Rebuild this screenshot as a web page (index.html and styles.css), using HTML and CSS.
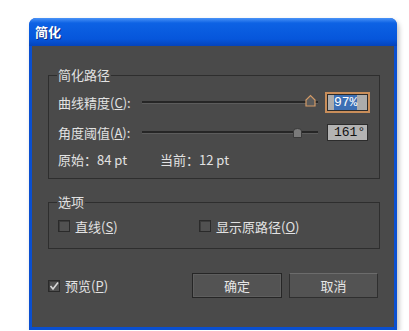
FILE: index.html
```html
<!DOCTYPE html>
<html lang="zh-CN">
<head>
    <meta charset="UTF-8">
    <title>简化</title>
    <link rel="stylesheet" href="styles.css">
</head>
<body>
    <div class="window">
        <div class="titlebar">简化</div>
        <div class="dialog">
            <fieldset class="group group-path">
                <legend>简化路径</legend>
                <div class="row">
                    <span class="label">曲线精度(<u>C</u>):</span>
                    <div class="slider">
                        <div class="track"></div>
                        <svg class="thumb thumb-active" style="left: 92.5%" width="11" height="13" viewBox="0 0 11 13">
                            <path d="M1 12 V6 L5.5 1.5 L10 6 V12 Z" fill="#5b5b5b" stroke="#d39a66" stroke-width="1.2"/>
                        </svg>
                    </div>
                    <span class="field field-focus"><span class="sel">97%</span></span>
                </div>
                <div class="row">
                    <span class="label">角度阈值(<u>A</u>):</span>
                    <div class="slider">
                        <div class="track"></div>
                        <svg class="thumb" style="left: 86%" width="9" height="10" viewBox="0 0 9 10">
                            <path d="M0.5 9.5 V3 Q0.5 0.5 4.5 0.5 Q8.5 0.5 8.5 3 V9.5 Z" fill="#7a7a7a" stroke="#3a3a3a"/>
                        </svg>
                    </div>
                    <span class="field">161°</span>
                </div>
                <div class="row row-info">
                    <span class="info">原始：84 pt</span>
                    <span>当前：12 pt</span>
                </div>
            </fieldset>

            <fieldset class="group group-options">
                <legend>选项</legend>
                <div class="row">
                    <label class="check check-first"><span class="box"></span>直线(<u>S</u>)</label>
                    <label class="check"><span class="box"></span>显示原路径(<u>O</u>)</label>
                </div>
            </fieldset>

            <div class="actions">
                <label class="check preview">
                    <span class="box">
                        <svg width="10" height="10" viewBox="0 0 10 10"><path d="M1.5 5 L4 8 L9 1.5" fill="none" stroke="#d8d8d8" stroke-width="1.6"/></svg>
                    </span>预览(<u>P</u>)
                </label>
                <button class="btn btn-default">确定</button>
                <button class="btn">取消</button>
            </div>
        </div>
    </div>
</body>
</html>
```

FILE: styles.css
```css
* {
    margin: 0;
    padding: 0;
    box-sizing: border-box;
}

body {
    background-color: #fff;
    font-family: "Noto Sans CJK SC", sans-serif;
    font-size: 13px;
    color: #e2e2e2;
}

.window {
    margin: 18px 0 0 29px;
    width: 368px;
    padding: 0 3px 3px;
    background-color: #0a4fd0;
    border-radius: 7px 7px 0 0;
    box-shadow: 2px 3px 5px rgba(0, 0, 0, 0.25);
}

.titlebar {
    height: 28px;
    margin: 0 -3px;
    padding: 0 6px;
    line-height: 28px;
    font-weight: bold;
    color: #fff;
    text-shadow: 1px 1px 0 #0b2d86;
    background: linear-gradient(#4a93f7, #0d62e4 18%, #0656db 75%, #0544bc);
    border-radius: 7px 7px 0 0;
}

.dialog {
    background-color: #4a4a4a;
    padding: 21px 14px 29px 16px;
}

.group {
    border: 1px solid #2e2e2e;
    padding: 9px 11px 9px 9px;
}

.group legend {
    padding: 0 1px;
    margin-left: -1px;
    line-height: 16px;
}

.group-options {
    margin-top: 15px;
    padding-top: 6px;
    padding-bottom: 12px;
}

.row {
    display: flex;
    align-items: center;
    height: 20px;
}

.row + .row {
    margin-top: 10px;
}

.row + .row-info {
    margin-top: 7px;
}

.label {
    width: 84px;
    white-space: nowrap;
}

.slider {
    flex: 1;
    position: relative;
    height: 20px;
    display: flex;
    align-items: center;
}

.track {
    width: 100%;
    height: 3px;
    background-color: #262626;
    border-bottom: 1px solid #5c5c5c;
}

.thumb {
    position: absolute;
    top: 3px;
}

.thumb-active {
    top: 2px;
}

.slider .thumb:not(.thumb-active) {
    top: 6px;
}

.field {
    margin-left: 9px;
    width: 41px;
    height: 17px;
    padding-left: 6px;
    line-height: 15px;
    font-family: "Liberation Mono", monospace;
    font-size: 13px;
    color: #111;
    background-color: #b3b3b3;
    border: 1px solid #2c2c2c;
}

.field-focus {
    outline: 2px solid #c98e5a;
    background-color: #acacac;
}

.sel {
    background-color: #3d6fb4;
    color: #fff;
}

.info {
    width: 102px;
}

.check {
    display: flex;
    align-items: center;
    white-space: nowrap;
}

.check-first {
    width: 141px;
}

.box {
    width: 12px;
    height: 12px;
    margin-right: 5px;
    background-color: #515151;
    border: 1px solid #2a2a2a;
    box-shadow: inset 1px 1px 0 #3c3c3c;
    display: flex;
    align-items: center;
    justify-content: center;
}

.actions {
    display: flex;
    align-items: center;
    margin-top: 24px;
    height: 25px;
}

.preview {
    flex: 1;
}

.btn {
    width: 89px;
    height: 25px;
    margin-left: 7px;
    font-family: inherit;
    font-size: 13px;
    color: #e6e6e6;
    background-color: #535353;
    border: 1px solid #2f2f2f;
    border-top-color: #6c6c6c;
}

.btn-default {
    width: 90px;
    border: 1px solid #262626;
    box-shadow: inset 0 0 0 1px #5e5e5e;
}

.btn:last-child {
    margin-right: 2px;
}
```
